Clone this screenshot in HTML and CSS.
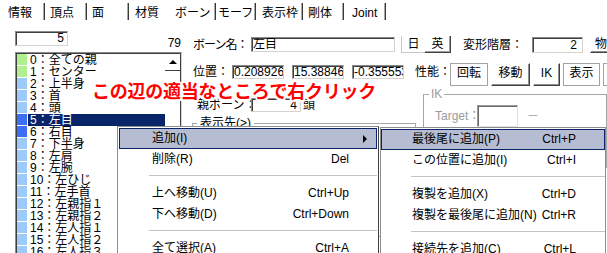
FILE: index.html
```html
<!DOCTYPE html>
<html lang="ja">
<head>
<meta charset="utf-8">
<title>PMXエディタ ボーン</title>
<link rel="stylesheet" href="styles.css">
</head>
<body>
<div class="app">
  <div class="tabs">
    <div class="tab t1"><span class="txt">情報</span><span class="sep"></span></div>
    <div class="tab t2"><span class="txt">頂点</span><span class="sep"></span></div>
    <div class="tab t3"><span class="txt">面</span><span class="sep"></span></div>
    <div class="tab t4 nosep"><span class="txt">材質</span><span class="sep"></span></div>
    <div class="tab t5"><span class="txt">ボーン</span><span class="sep"></span></div>
    <div class="tab t6"><span class="txt">モーフ</span><span class="sep"></span></div>
    <div class="tab t7"><span class="txt">表示枠</span><span class="sep"></span></div>
    <div class="tab t8"><span class="txt">剛体</span><span class="sep"></span></div>
    <div class="tab t9"><span class="txt">Joint</span><span class="sep"></span></div>
  </div>

  <div class="main">
    <div class="left">
      <div class="spin-row">
        <div class="edit spin">5</div>
        <span class="count">79</span>
      </div>
      <div class="list">
        <div class="rows">
          <div class="row"><span class="sw green"></span><span class="item">0：全ての親</span></div>
          <div class="row"><span class="sw green"></span><span class="item">1：センター</span></div>
          <div class="row"><span class="sw blue"></span><span class="item">2：上半身</span></div>
          <div class="row"><span class="sw blue"></span><span class="item">3：首</span></div>
          <div class="row"><span class="sw blue"></span><span class="item">4：頭</span></div>
          <div class="row sel"><span class="sw deep"></span><span class="item">5：左目</span></div>
          <div class="row"><span class="sw deep"></span><span class="item">6：右目</span></div>
          <div class="row"><span class="sw blue"></span><span class="item">7：下半身</span></div>
          <div class="row"><span class="sw blue"></span><span class="item">8：左肩</span></div>
          <div class="row"><span class="sw blue"></span><span class="item">9：左腕</span></div>
          <div class="row"><span class="sw blue"></span><span class="item">10：左ひじ</span></div>
          <div class="row"><span class="sw blue"></span><span class="item">11：左手首</span></div>
          <div class="row"><span class="sw blue"></span><span class="item">12：左親指１</span></div>
          <div class="row"><span class="sw blue"></span><span class="item">13：左親指２</span></div>
          <div class="row"><span class="sw blue"></span><span class="item">14：左人指１</span></div>
          <div class="row"><span class="sw blue"></span><span class="item">15：左人指２</span></div>
          <div class="row"><span class="sw blue"></span><span class="item">16：左人指３</span></div>
        </div>
        <div class="vscroll"><div class="up"></div></div>
      </div>
    </div>

    <div class="panel">
      <div class="prow r1">
        <span class="lbl lbl-name">ボーン名：</span>
        <div class="edit name">左目</div>
        <div class="jpen"><span class="b-ja">日</span><span class="b-en">英</span></div>
        <span class="lbl lbl-level">変形階層：</span>
        <div class="edit level">2</div>
        <div class="btn raised phys">物</div>
      </div>
      <div class="prow r2">
        <span class="lbl lbl-pos">位置：</span>
        <div class="edit pos">0.2089266</div>
        <div class="edit pos">15.38846</div>
        <div class="edit pos">-0.355553</div>
        <span class="lbl lbl-perf">性能：</span>
        <div class="btn on w38">回転</div>
        <div class="btn raised w39">移動</div>
        <div class="btn raised w27">IK</div>
        <div class="btn on w37">表示</div>
        <div class="btn on w40">操作</div>
      </div>
      <div class="lower">
        <div class="lower-left">
          <div class="parent-row">
            <span class="lbl lbl-parent">親ボーン：</span>
            <div class="edit parent">4</div>
            <span class="pname">頭</span>
          </div>
          <fieldset class="group disp"><legend>表示先(&gt;)</legend></fieldset>
        </div>
        <fieldset class="group ik">
          <legend>IK</legend>
          <div class="target-row">
            <span class="lbl dim lbl-target">Target：</span>
            <div class="edit target"></div>
            <span class="dim dash">－</span>
          </div>
        </fieldset>
      </div>
    </div>
  </div>

  <div class="note">この辺の適当なところで右クリック</div>

  <div class="menu m1">
    <div class="mi hot"><span class="ml">追加(I)</span><span class="mk"></span><span class="arr"><i class="tri"></i></span></div>
    <div class="mi"><span class="ml">削除(R)</span><span class="mk">Del</span><span class="arr"></span></div>
    <div class="msep"></div>
    <div class="mi"><span class="ml">上へ移動(U)</span><span class="mk">Ctrl+Up</span><span class="arr"></span></div>
    <div class="mi"><span class="ml">下へ移動(D)</span><span class="mk">Ctrl+Down</span><span class="arr"></span></div>
    <div class="msep"></div>
    <div class="mi"><span class="ml">全て選択(A)</span><span class="mk">Ctrl+A</span><span class="arr"></span></div>
  </div>

  <div class="menu m2">
    <div class="mi hot"><span class="ml">最後尾に追加(P)</span><span class="mk">Ctrl+P</span></div>
    <div class="mi"><span class="ml">この位置に追加(I)</span><span class="mk">Ctrl+I</span></div>
    <div class="msep"></div>
    <div class="mi"><span class="ml">複製を追加(X)</span><span class="mk">Ctrl+D</span></div>
    <div class="mi"><span class="ml">複製を最後尾に追加(N)</span><span class="mk">Ctrl+R</span></div>
    <div class="msep"></div>
    <div class="mi"><span class="ml">接続先を追加(C)</span><span class="mk">Ctrl+L</span></div>
  </div>
</div>
</body>
</html>
```

FILE: styles.css
```css
* { box-sizing: border-box; }
html, body { margin: 0; padding: 0; }
body {
  width: 607px;
  height: 253px;
  overflow: hidden;
  background: #fff;
  color: #000;
  font-family: "Liberation Sans", "Noto Sans CJK JP", sans-serif;
  font-size: 12px;
}
.app { position: relative; width: 607px; height: 253px; overflow: hidden; }

/* ---------- tabs ---------- */
.tabs { display: flex; height: 22px; }
.tab { display: flex; align-items: center; height: 22px; flex-shrink: 0; }
.tab .txt { flex: 1; line-height: 14px; margin-top: 4px; white-space: nowrap; }
.tab .sep {
  width: 2px; height: 17px;
  border-left: 1px solid #a8a8a8;
  border-right: 1px solid #3a3a3a;
}
.tab.nosep .sep { visibility: hidden; }
.t1 { width: 45px; padding-left: 8px; }
.t2 { width: 42px; padding-left: 5px; }
.t3 { width: 42px; padding-left: 5px; }
.t4 { width: 44px; padding-left: 6px; }
.t5 { width: 43px; padding-left: 2px; }
.t6 { width: 40px; padding-left: 2px; }
.t7 { width: 47px; padding-left: 6px; }
.t8 { width: 41px; padding-left: 5px; }
.t9 { width: 42px; padding-left: 8px; }

/* ---------- common controls ---------- */
.edit {
  flex-shrink: 0;
  background: #fff;
  border: 1px solid;
  border-color: #8a8a8a #d6d3ce #d6d3ce #8a8a8a;
  box-shadow: inset 1px 1px 0 #404040;
  white-space: nowrap;
  overflow: hidden;
}
.lbl { flex-shrink: 0; white-space: nowrap; line-height: 12px; }
.dim { color: #9c9c9c; }
.btn {
  flex-shrink: 0;
  height: 23px;
  text-align: center;
  line-height: 12px;
  padding-top: 3px;
  white-space: nowrap;
}
.btn.on { border: 1px solid #a2a2a2; }
.btn.raised {
  border: 1px solid;
  border-color: #fff #404040 #404040 #fff;
  box-shadow: inset -1px -1px 0 #909090;
}

/* ---------- layout ---------- */
.main { display: flex; padding-left: 15px; }
.left { width: 167px; flex-shrink: 0; display: flex; flex-direction: column; }
.spin-row { display: flex; margin-top: 9px; height: 15px; }
.spin { width: 53px; height: 15px; text-align: right; padding-right: 3px; line-height: 13px; }
.count { margin-left: auto; margin-right: 1px; margin-top: 6px; line-height: 12px; }

.list {
  margin-top: 6px;
  height: 205px;
  display: flex;
  border-left: 1px solid #8a8a8a;
  border-top: 1px solid #8a8a8a;
  border-right: 1px solid #d6d3ce;
  box-shadow: inset 1px 1px 0 #404040;
  padding: 1px 0 0 1px;
}
.rows { width: 148px; flex-shrink: 0; }
.row { display: flex; height: 12px; }
.sw { width: 10px; height: 11px; flex-shrink: 0; }
.sw.green { background: #b0f090; }
.sw.blue { background: #9ccbfb; }
.sw.deep { background: #3d6ff4; }
.item { flex: 1; margin-left: 1px; padding-left: 2px; line-height: 12px; white-space: nowrap; }
.row.sel .item { background: #0a246a; color: #fff; }
.vscroll { width: 16px; flex-shrink: 0; border-right: 1px solid #404040; }
.vscroll .up {
  height: 17px;
  border-bottom: 1px solid #404040;
  display: flex; align-items: center; justify-content: center;
}
.vscroll .up::before {
  content: "";
  border-left: 4px solid transparent;
  border-right: 4px solid transparent;
  border-bottom: 4px solid #000;
}

.panel { margin-left: 10px; flex: 1; min-width: 0; display: flex; flex-direction: column; }
.prow { display: flex; flex-shrink: 0; }
.r1 { margin-top: 14px; height: 17px; align-items: center; }
.lbl-name { width: 58px; margin-left: 1px; letter-spacing: -1px; }
.edit.name { width: 144px; height: 15px; padding-left: 1px; line-height: 13px; }
.jpen { display: flex; margin-left: 6px; width: 50px; height: 17px; flex-shrink: 0; }
.jpen span { display: block; text-align: center; line-height: 16px; }
.b-ja { width: 24px; border-left: 1px solid #c8c8c8; border-bottom: 1px solid #c8c8c8; }
.b-en { width: 26px; border-right: 1px solid #404040; border-bottom: 1px solid #404040; box-shadow: inset -1px -1px 0 #a0a0a0; }
.lbl-level { width: 69px; margin-left: 12px; }
.edit.level { width: 51px; height: 16px; text-align: right; padding-right: 5px; line-height: 14px; }
.btn.phys { margin-left: 7px; width: 40px; height: 17px; padding-top: 1px; text-align: left; padding-left: 4px; }

.r2 { margin-top: 10px; height: 23px; align-items: flex-start; }
.lbl-pos { width: 39px; margin-left: 1px; margin-top: 3px; }
.edit.pos { width: 52px; height: 14px; margin-top: 2px; padding-left: 1px; line-height: 12px; }
.edit.pos + .edit.pos { margin-left: 8px; }
.lbl-perf { width: 35px; margin-left: 11px; margin-top: 3px; }
.btn + .btn { margin-left: 3px; }
.w38 { width: 38px; }
.w39 { width: 39px; }
.w27 { width: 27px; }
.w37 { width: 37px; }
.w40 { width: 40px; }

.lower { display: flex; margin-top: 2px; }
.lower-left { width: 224px; flex-shrink: 0; }
.parent-row { display: flex; margin-top: 10px; height: 14px; }
.lbl-parent { width: 54px; margin-left: 5px; line-height: 14px; }
.edit.parent { width: 50px; height: 14px; text-align: right; padding-right: 3px; line-height: 12px; }
.pname { margin-left: 2px; line-height: 14px; }

.group {
  margin: 0;
  border: 1px solid #a6a6a6;
  min-width: 0;
}
.group legend { line-height: 12px; }
.disp { margin-top: 5px; height: 120px; padding: 0 0 0 4px; }
.disp legend { padding: 0 3px; }
.ik { margin-left: 7px; width: 200px; height: 80px; padding: 0 0 0 5px; }
.ik legend { padding: 0 2px; color: #9c9c9c; }
.target-row { display: flex; margin-top: 5px; align-items: flex-start; }
.lbl-target { width: 42px; margin-left: 6px; margin-top: 4px; line-height: 14px; }
.edit.target { width: 41px; height: 22px; border-color: #9a9a9a #e0e0e0 #e0e0e0 #9a9a9a; box-shadow: inset 1px 1px 0 #6a6a6a; }
.dash { margin-left: 9px; margin-top: 4px; line-height: 14px; }

/* ---------- annotation ---------- */
.note {
  position: absolute;
  left: 92px;
  top: 81px;
  font-family: "Noto Sans CJK JP", sans-serif;
  font-weight: bold;
  font-size: 18px;
  line-height: 18px;
  letter-spacing: -0.25px;
  color: #ff0000;
  white-space: nowrap;
  text-shadow: -2px 0 #fff, 2px 0 #fff, 0 -2px #fff, 0 2px #fff,
               -1.5px -1.5px #fff, 1.5px -1.5px #fff, -1.5px 1.5px #fff, 1.5px 1.5px #fff;
}

/* ---------- context menus ---------- */
.menu {
  position: absolute;
  background: #fff;
  border: 1px solid #8d8d8d;
  height: 150px;
}
.m1 { left: 117px; top: 126px; width: 262px; padding: 1px 1px 0 1px; border-right-color: #404040; border-right-width: 1px; }
.m2 { left: 380px; top: 127px; width: 226px; padding: 1px 0 0 0; }
.mi {
  display: flex;
  align-items: center;
  height: 21px;
  border: 1px solid transparent;
  line-height: 19px;
  white-space: nowrap;
}
.m1 .mi { padding-left: 32px; padding-right: 8px; }
.m2 .mi { padding-left: 30px; padding-right: 28px; }
.mi .ml { flex: 1; }
.mi .mk { text-align: right; }
.mi .arr { width: 19px; display: flex; justify-content: flex-end; padding-right: 1px; }
.tri {
  display: block;
  border-top: 4px solid transparent;
  border-bottom: 4px solid transparent;
  border-left: 4px solid #000;
}
.mi.hot { background: #b6bdd2; border-color: #0a246a; }
.msep { height: 8px; }
.msep::after {
  content: "";
  display: block;
  height: 1px;
  margin-top: 5px;
  background: #c4c4c4;
}
.m1 .msep::after { margin-left: 30px; }
.m2 .msep::after { margin-left: 30px; }
```
